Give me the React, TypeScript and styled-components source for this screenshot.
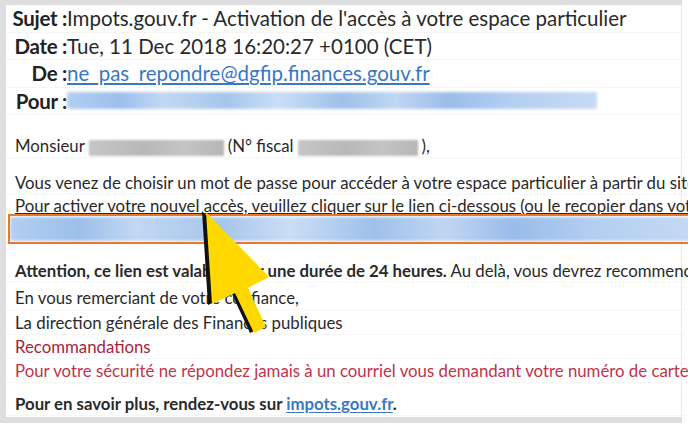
import React from "react";
import styled, { createGlobalStyle } from "styled-components";

const Global = createGlobalStyle`
  html, body { margin: 0; padding: 0; background: #ffffff; overflow: hidden; }
  body { font-family: Lato, "Open Sans", "Liberation Sans", sans-serif; color: #262626; }
`;

const Page = styled.div`
  position: relative;
  width: 688px;
  height: 429px;
  overflow: hidden;
  background: #ffffff;
`;

const Frame = styled.div`
  width: 676px;
  height: 412px;
  padding: 5px 0 6px 6px;
  background: #dedede;
`;

const Panel = styled.div`
  height: 412px;
  background: #ffffff;
  border-right: 1px solid #e8e8e8;
  display: flex;
  flex-direction: column;
  overflow: visible;
  & > * { flex: none; }
`;

const HeaderRow = styled.div`
  display: flex;
  align-items: center;
  height: 27.5px;
  border-bottom: 1px solid #f6f6f6;
  box-sizing: border-box;
  font-size: 20.5px;
  white-space: nowrap;
`;

const Label = styled.span`
  width: 61px;
  text-align: right;
  font-weight: 700;
  color: #222;
  flex: none;
  letter-spacing: -0.3px;
`;

const Value = styled.span`
  color: #2a2a2a;
`;

const MailLink = styled.a`
  color: #3a78c4;
  text-decoration: underline;
  text-underline-offset: 2px;
`;

const BlurBlue = styled.div<{ $w: number; $h: number }>`
  width: ${(p) => p.$w}px;
  height: ${(p) => p.$h}px;
  background: linear-gradient(
    90deg,
    #b3cff1 0%,
    #9cbfeb 10%,
    #c2d8f3 18%,
    #a6c5ec 30%,
    #cadef5 40%,
    #9fc0ea 52%,
    #c0d6f2 62%,
    #9abcea 72%,
    #b5cff1 84%,
    #c6daf4 100%
  );
  filter: blur(1.5px);
  border-radius: 2px;
`;

const BlurGray = styled.span<{ $w: number }>`
  display: inline-block;
  width: ${(p) => p.$w}px;
  height: 16px;
  vertical-align: middle;
  background: linear-gradient(90deg, #c6c6c6, #b8b8b8 40%, #c4c4c4 70%, #b6b6b6);
  filter: blur(0.8px);
  margin: 0 4px 0 4px;
`;

const Line = styled.div<{ $mt?: number; $h?: number; $lh?: number; $color?: string; $bold?: boolean }>`
  height: ${(p) => p.$h ?? 24}px;
  line-height: ${(p) => p.$lh ?? 24}px;
  margin-top: ${(p) => p.$mt ?? 0}px;
  padding-left: 9px;
  font-size: 16.8px;
  white-space: nowrap;
  color: ${(p) => p.$color ?? "#2a2a2a"};
  font-weight: ${(p) => (p.$bold ? 700 : 400)};
  border-bottom: 1px solid #f7f7f7;
  box-sizing: border-box;
  width: 682px;
`;

const Strong = styled.span`
  font-weight: 700;
`;

const Underlined = styled.span`
  text-decoration: underline;
  text-underline-offset: 1px;
`;

const LinkBox = styled.div`
  margin-left: 2px;
  width: 700px;
  height: 30px;
  box-sizing: border-box;
  border: 2px solid #e8792b;
  padding: 1px 0;
  overflow: hidden;
`;

const Arrow = styled.svg`
  position: absolute;
  left: 0;
  top: 0;
  pointer-events: none;
`;

export default function App() {
  return (
    <Page>
      <Global />
      <Frame>
        <Panel>
          <HeaderRow>
            <Label>Sujet :</Label>
            <Value>Impots.gouv.fr - Activation de l'accès à votre espace particulier</Value>
          </HeaderRow>
          <HeaderRow>
            <Label>Date :</Label>
            <Value>Tue, 11 Dec 2018 16:20:27 +0100 (CET)</Value>
          </HeaderRow>
          <HeaderRow>
            <Label>De :</Label>
            <MailLink>ne_pas_repondre@dgfip.finances.gouv.fr</MailLink>
          </HeaderRow>
          <HeaderRow>
            <Label>Pour :</Label>
            <BlurBlue $w={530} $h={17} />
          </HeaderRow>

          <Line $mt={19}>
            Monsieur<BlurGray $w={135} />(N° fiscal<BlurGray $w={120} />),
          </Line>
          <Line $mt={13}>
            Vous venez de choisir un mot de passe pour accéder à votre espace particulier à partir du site
          </Line>
          <Line $h={19} $lh={21}>
            <Underlined>
              Pour activer votre nouvel accès, veuillez cliquer sur le lien ci-dessous (ou le recopier dans votre
            </Underlined>
          </Line>
          <LinkBox>
            <BlurBlue $w={700} $h={24} />
          </LinkBox>
          <Line $mt={15}>
            <Strong>Attention, ce lien est valable pour une durée de 24 heures.</Strong> Au delà, vous devrez recommencer
          </Line>
          <Line $mt={3}>En vous remerciant de votre confiance,</Line>
          <Line $mt={1}>La direction générale des Finances publiques</Line>
          <Line $mt={0} $color="#a8243a">Recommandations</Line>
          <Line $mt={0} $color="#c0334a">
            Pour votre sécurité ne répondez jamais à un courriel vous demandant votre numéro de carte
          </Line>
          <Line $mt={9} $bold>
            Pour en savoir plus, rendez-vous sur <MailLink>impots.gouv.fr</MailLink>.
          </Line>
        </Panel>
      </Frame>
      <Arrow width="688" height="429" viewBox="0 0 688 429">
        <polygon
          points="202,211 208,305 232,294 250,333 263,327 245,288 266,278"
          fill="#111"
        />
        <polygon
          points="206,212 212,304 235,293 254,333 266,327 248,288 269,277"
          fill="#ffd800"
        />
      </Arrow>
    </Page>
  );
}
